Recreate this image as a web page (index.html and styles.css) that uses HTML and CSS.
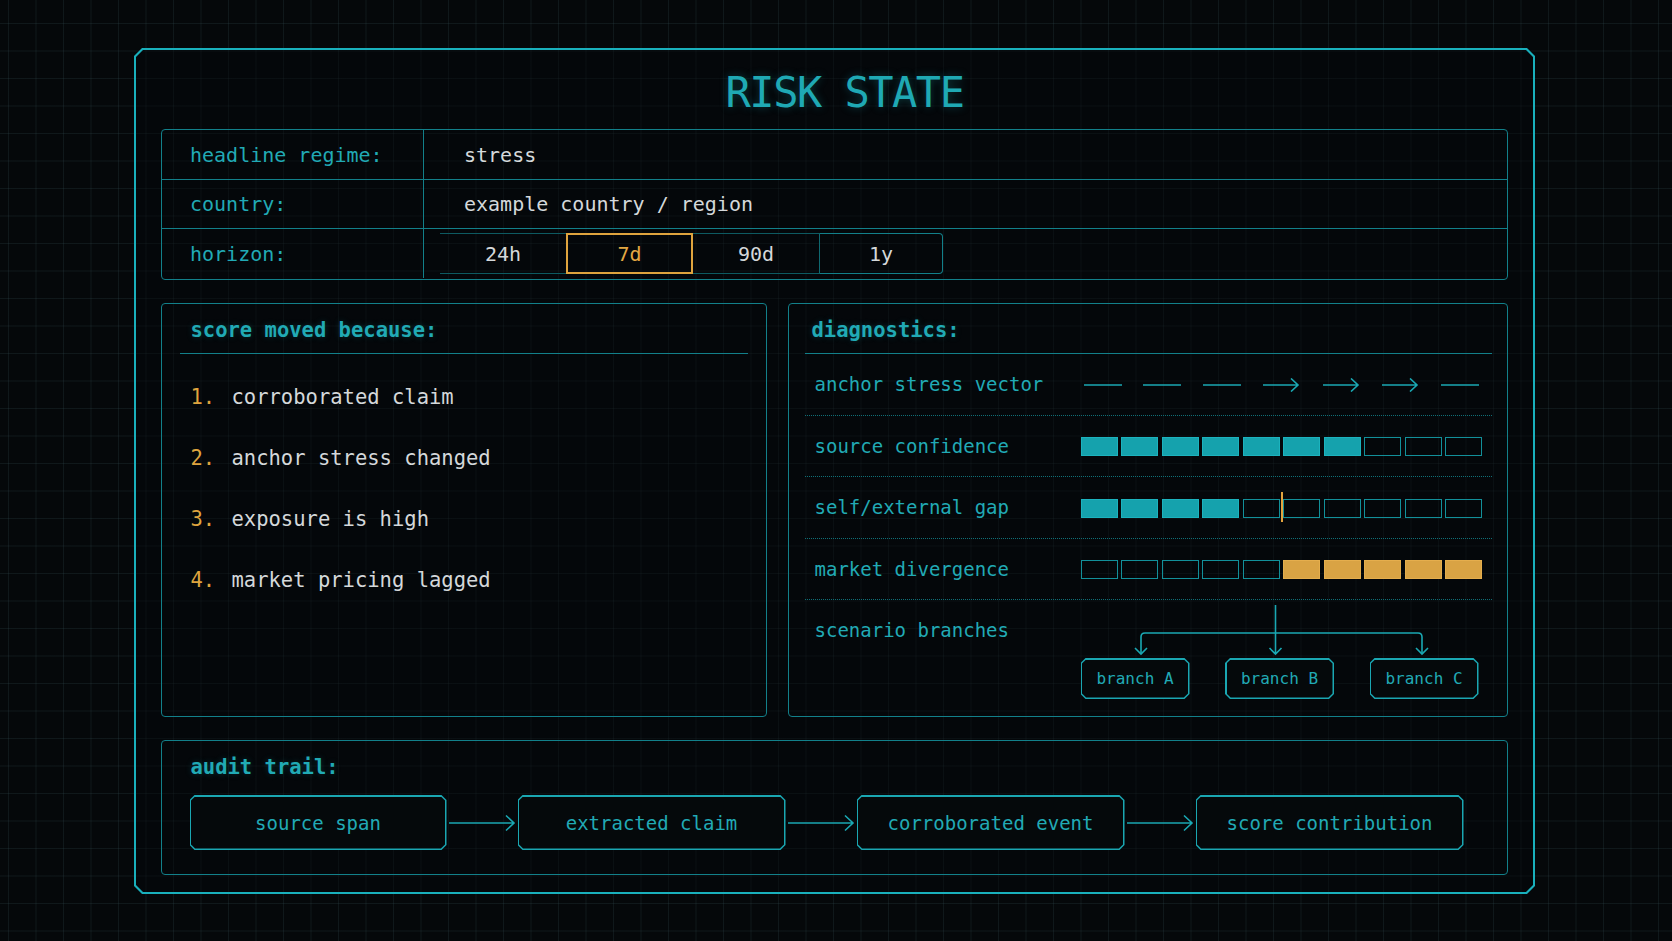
FILE: index.html
```html
<!DOCTYPE html>
<html lang="en">
<head>
    <meta charset="UTF-8">
    <link rel="stylesheet" href="styles.css">
    <title>Risk State</title>
</head>

<body>
<div class="frame">
    <div class="frame-inner">
        <h1 class="title">RISK STATE</h1>

        <div class="summary">
            <div class="summary-row">
                <div class="summary-label">headline regime:</div>
                <div class="summary-value">stress</div>
            </div>
            <div class="summary-row">
                <div class="summary-label">country:</div>
                <div class="summary-value">example country / region</div>
            </div>
            <div class="summary-row">
                <div class="summary-label">horizon:</div>
                <div class="summary-value horizon-cell">
                    <div class="horizon">
                        <span class="seg">24h</span>
                        <span class="seg active">7d</span>
                        <span class="seg">90d</span>
                        <span class="seg">1y</span>
                    </div>
                </div>
            </div>
        </div>

        <div class="middle">
            <div class="panel reasons">
                <div class="panel-head">score moved because:</div>
                <ol class="reason-list">
                    <li><span class="num">1.</span>corroborated claim</li>
                    <li><span class="num">2.</span>anchor stress changed</li>
                    <li><span class="num">3.</span>exposure is high</li>
                    <li><span class="num">4.</span>market pricing lagged</li>
                </ol>
            </div>

            <div class="panel diagnostics">
                <div class="panel-head">diagnostics:</div>
                <div class="diag-body">
                    <div class="diag-row">
                        <span class="diag-label">anchor stress vector</span>
                        <div class="vector">
                            <svg width="38" height="14" viewBox="0 0 38 14"><path d="M0 7H38"/></svg>
                            <svg width="38" height="14" viewBox="0 0 38 14"><path d="M0 7H38"/></svg>
                            <svg width="38" height="14" viewBox="0 0 38 14"><path d="M0 7H38"/></svg>
                            <svg width="38" height="14" viewBox="0 0 38 14"><path d="M1 7H36M29 0.5L36 7L29 13.5"/></svg>
                            <svg width="38" height="14" viewBox="0 0 38 14"><path d="M1 7H36M29 0.5L36 7L29 13.5"/></svg>
                            <svg width="38" height="14" viewBox="0 0 38 14"><path d="M1 7H36M29 0.5L36 7L29 13.5"/></svg>
                            <svg width="38" height="14" viewBox="0 0 38 14"><path d="M0 7H38"/></svg>
                        </div>
                    </div>
                    <div class="diag-row">
                        <span class="diag-label">source confidence</span>
                        <div class="bar">
                            <i class="on"></i><i class="on"></i><i class="on"></i><i class="on"></i><i class="on"></i>
                            <i class="on"></i><i class="on"></i><i></i><i></i><i></i>
                        </div>
                    </div>
                    <div class="diag-row">
                        <span class="diag-label">self/external gap</span>
                        <div class="bar">
                            <i class="on"></i><i class="on"></i><i class="on"></i><i class="on"></i><i></i>
                            <i></i><i></i><i></i><i></i><i></i>
                            <span class="marker"></span>
                        </div>
                    </div>
                    <div class="diag-row">
                        <span class="diag-label">market divergence</span>
                        <div class="bar">
                            <i></i><i></i><i></i><i></i><i></i>
                            <i class="amber"></i><i class="amber"></i><i class="amber"></i><i class="amber"></i><i class="amber"></i>
                        </div>
                    </div>
                    <div class="diag-row last">
                        <span class="diag-label">scenario branches</span>
                        <div class="tree">
                            <svg class="tree-lines" width="398" height="58" viewBox="0 0 398 58">
                                <path d="M194.5 5V54M188.5 48L194.5 54L200.5 48"/>
                                <path d="M60 54V37Q60 33 64 33H337Q341 33 341 37V54"/>
                                <path d="M54 48L60 54L66 48M335 48L341 54L347 48"/>
                            </svg>
                            <div class="branches">
                                <div class="chip branch"><span class="chip-in">branch A</span></div>
                                <div class="chip branch"><span class="chip-in">branch B</span></div>
                                <div class="chip branch"><span class="chip-in">branch C</span></div>
                            </div>
                        </div>
                    </div>
                </div>
            </div>
        </div>

        <div class="panel audit">
            <div class="audit-head">audit trail:</div>
            <div class="trail">
                <div class="chip step first"><span class="chip-in">source span</span></div>
                <svg class="link" width="71" height="18" viewBox="0 0 71 18"><path d="M2 9H67M59 1.5L67 9L59 16.5"/></svg>
                <div class="chip step"><span class="chip-in">extracted claim</span></div>
                <svg class="link" width="71" height="18" viewBox="0 0 71 18"><path d="M2 9H67M59 1.5L67 9L59 16.5"/></svg>
                <div class="chip step"><span class="chip-in">corroborated event</span></div>
                <svg class="link" width="71" height="18" viewBox="0 0 71 18"><path d="M2 9H67M59 1.5L67 9L59 16.5"/></svg>
                <div class="chip step"><span class="chip-in">score contribution</span></div>
            </div>
        </div>
    </div>
</div>
</body>
</html>
```

FILE: styles.css
```css
* {
    box-sizing: border-box;
}

body {
    margin: 0;
    height: 941px;
    overflow: hidden;
    font-family: "DejaVu Sans Mono", "Liberation Mono", monospace;
    color: #d4d8da;
    background-color: #05080a;
    background-image:
        linear-gradient(rgba(70, 105, 110, 0.17) 1px, transparent 1px),
        linear-gradient(90deg, rgba(70, 105, 110, 0.17) 1px, transparent 1px);
    background-size: 27.5px 27.5px;
    background-position: 8px 23px;
    background-attachment: fixed;
}

/* outer chamfered frame */
.frame {
    width: 1401px;
    height: 846px;
    margin: 48px 0 0 134px;
    padding: 2px;
    background: #19b0bc;
    clip-path: polygon(8px 0, calc(100% - 8px) 0, 100% 8px, 100% calc(100% - 8px), calc(100% - 8px) 100%, 8px 100%, 0 calc(100% - 8px), 0 8px);
}

.frame-inner {
    height: 100%;
    padding: 0 25px;
    background-color: #04070a;
    background-image:
        linear-gradient(rgba(70, 105, 110, 0.09) 1px, transparent 1px),
        linear-gradient(90deg, rgba(70, 105, 110, 0.09) 1px, transparent 1px);
    background-size: 27.5px 27.5px;
    background-position: 8px 23px;
    background-attachment: fixed;
    clip-path: polygon(7px 0, calc(100% - 7px) 0, 100% 7px, 100% calc(100% - 7px), calc(100% - 7px) 100%, 7px 100%, 0 calc(100% - 7px), 0 7px);
}

.title {
    margin: 0;
    padding: 6px 0 0 20px;
    height: 79px;
    line-height: 73px;
    text-align: center;
    font-size: 42px;
    font-weight: normal;
    letter-spacing: -1.5px;
    color: #1fa9b4;
    text-shadow: 0 0 8px rgba(30, 170, 180, 0.35);
}

/* summary table */
.summary {
    height: 151px;
    border: 1.5px solid #12808a;
    border-radius: 4px;
    font-size: 20px;
}

.summary-row {
    display: grid;
    grid-template-columns: 262px 1fr;
    height: 49px;
    border-bottom: 1.5px solid #12808a;
}

.summary-row:first-child {
    height: 50px;
}

.summary-row:last-child {
    border-bottom: none;
}

.summary-label {
    display: flex;
    align-items: center;
    padding-left: 28px;
    border-right: 1.5px solid #12808a;
    color: #21aab5;
}

.summary-value {
    display: flex;
    align-items: center;
    padding-left: 40px;
    color: #d4d8da;
}

.horizon-cell {
    padding-left: 16px;
}

.horizon {
    display: flex;
    height: 41px;
}

.seg {
    display: flex;
    align-items: center;
    justify-content: center;
    width: 127px;
    border-top: 1px solid #0d5a61;
    border-bottom: 1px solid #0d5a61;
    border-right: 1px solid #0f6870;
}

.seg:last-child {
    width: 123px;
    border-right: 1.5px solid #12808a;
    border-top-color: #12808a;
    border-bottom-color: #12808a;
    border-radius: 0 4px 4px 0;
}

.seg.active {
    border: 2px solid #dfa43e;
    margin-left: -1px;
    color: #e3a843;
}

/* middle panels */
.middle {
    display: grid;
    grid-template-columns: 606px 720px;
    gap: 21px;
    height: 414px;
    margin-top: 23px;
}

.panel {
    border: 1.5px solid #12808a;
    border-radius: 4px;
}

.panel-head {
    height: 50px;
    line-height: 52px;
    border-bottom: 1.5px solid #12808a;
    font-size: 20.5px;
    font-weight: bold;
    color: #21aab5;
    text-shadow: 0 0 6px rgba(30, 170, 180, 0.25);
}

.reasons .panel-head {
    margin: 0 18.5px 0 17.5px;
    padding-left: 11px;
}

.reason-list {
    list-style: none;
    margin: 0 18.5px 0 17.5px;
    padding: 12px 0 0 11px;
    font-size: 20.5px;
}

.reason-list li {
    display: flex;
    align-items: center;
    height: 61px;
}

.num {
    width: 41px;
    color: #dfa43e;
}

.diagnostics .panel-head {
    margin: 0 15px 0 15.5px;
    padding-left: 7px;
}

.diag-body {
    margin: 0 15px 0 15.5px;
}

.diag-row {
    display: grid;
    grid-template-columns: 266px 402px;
    align-items: center;
    height: 61.5px;
    padding-left: 10px;
    border-bottom: 1px dotted #0f6f77;
}

.diag-row.last {
    align-items: start;
    border-bottom: none;
}

.diag-label {
    font-size: 19px;
    color: #21aab5;
    line-height: 61px;
}

.vector {
    display: flex;
    justify-content: space-between;
    width: 395px;
    margin-left: 3px;
}

.vector svg,
.tree-lines,
.link {
    display: block;
    fill: none;
    stroke: #1aa8b3;
    stroke-width: 1.6;
}

.bar {
    position: relative;
    display: grid;
    grid-template-columns: repeat(10, 1fr);
    gap: 3.5px;
    height: 19px;
    margin-top: 1px;
}

.bar i {
    border: 1.5px solid #12909a;
}

.bar i.on {
    background: #15a2ad;
    border-color: #1cb3be;
}

.bar i.amber {
    background: #d9a344;
    border-color: #e5ae4d;
}

.marker {
    position: absolute;
    left: calc(50% - 1px);
    top: -7px;
    bottom: -4px;
    width: 2.5px;
    background: #e3a43e;
}

.tree {
    width: 398px;
}

.branches {
    display: flex;
    justify-content: space-between;
}

/* chamfered boxes */
.chip {
    padding: 1.5px;
    background: #1aa7b2;
    clip-path: polygon(5px 0, calc(100% - 5px) 0, 100% 5px, 100% calc(100% - 5px), calc(100% - 5px) 100%, 5px 100%, 0 calc(100% - 5px), 0 5px);
}

.chip-in {
    display: flex;
    align-items: center;
    justify-content: center;
    height: 100%;
    background: #05090b;
    color: #21aab5;
    clip-path: polygon(4.1px 0, calc(100% - 4.1px) 0, 100% 4.1px, 100% calc(100% - 4.1px), calc(100% - 4.1px) 100%, 4.1px 100%, 0 calc(100% - 4.1px), 0 4.1px);
}

.branch {
    width: 109px;
    height: 41px;
    font-size: 16px;
}

/* audit trail */
.audit {
    height: 135px;
    margin-top: 23px;
}

.audit-head {
    height: 52px;
    line-height: 52px;
    padding-left: 28.5px;
    font-size: 20.5px;
    font-weight: bold;
    color: #21aab5;
    text-shadow: 0 0 6px rgba(30, 170, 180, 0.25);
}

.trail {
    display: flex;
    align-items: center;
    margin-top: 2px;
    padding-left: 27.5px;
}

.step {
    width: 268px;
    height: 55px;
    font-size: 19px;
}

.step.first {
    width: 257px;
}
```
